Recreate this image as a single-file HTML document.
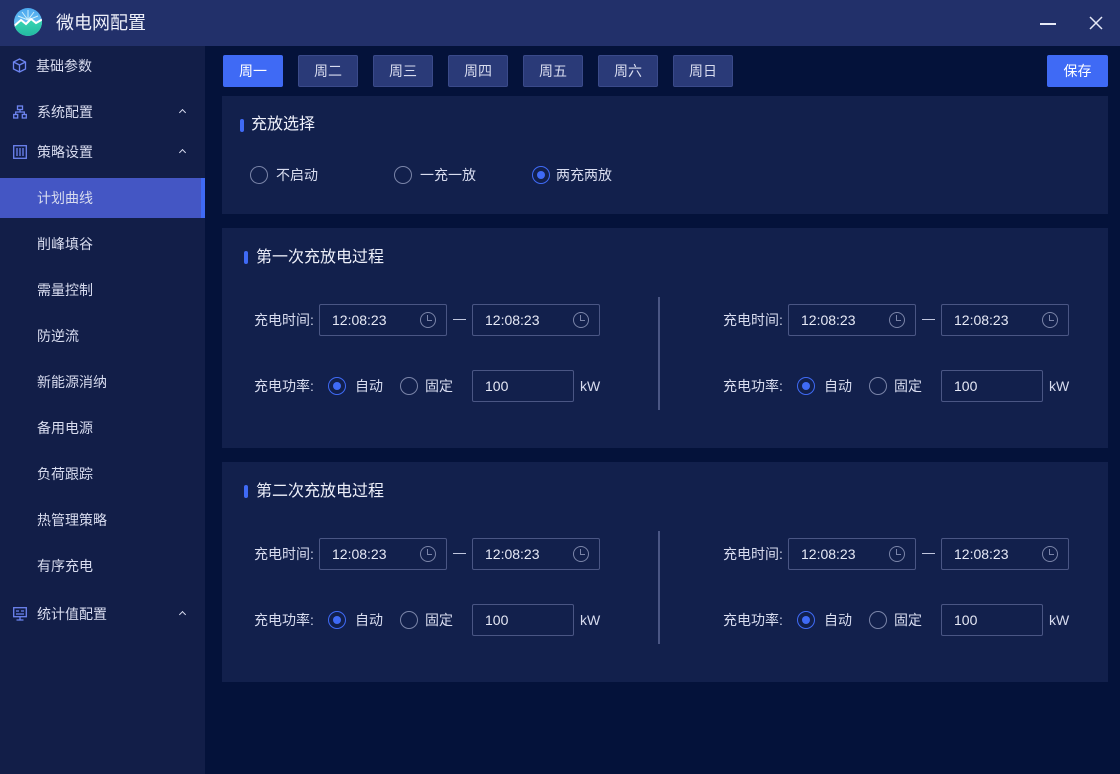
<!DOCTYPE html><html><head><meta charset="utf-8"><style>
*{margin:0;padding:0;box-sizing:border-box}
body{width:1120px;height:774px;background:#04123a;font-family:"Liberation Sans","Noto Sans CJK SC",sans-serif;color:#d8dcef;position:relative;overflow:hidden;font-size:14px}
.a{position:absolute}
.title{left:0;top:0;width:1120px;height:46px;background:#22306a}
.side{left:0;top:46px;width:205px;height:728px;background:#121e48}
.mi{position:absolute;left:37px;font-size:14px;color:#d8dcef;line-height:20px}
.car{position:absolute;left:180px;width:5px;height:5px;border-left:1.5px solid #d8dcef;border-top:1.5px solid #d8dcef;transform:rotate(45deg)}
.btn{position:absolute;top:55px;width:60px;height:32px;background:#2a3a78;border:1px solid #3a4a8a;border-radius:2px;text-align:center;line-height:30px;font-size:14px;color:#d8dcef}
.blue{background:#3f6af5;border-color:#3f6af5;color:#fff}
.panel{position:absolute;left:222px;width:886px;background:#12204c}
.ph{position:absolute;font-size:16px;color:#eef0fa;line-height:20px}
.bar{position:absolute;width:4px;height:13px;border-radius:2px;background:#3f6af5}
.r{position:absolute;width:18px;height:18px;border-radius:50%;border:1.5px solid #7a84a8}
.r.on{border-color:#3f6af5}
.r.on::after{content:"";position:absolute;left:3.5px;top:3.5px;width:8px;height:8px;border-radius:50%;background:#3f6af5}
.lb{position:absolute;font-size:14px;line-height:20px;color:#d8dcef}
.in{position:absolute;height:32px;border:1px solid #4a5684;border-radius:2px;font-size:14px;line-height:30px;padding-left:12px;color:#e6e9f6}
.clk{position:absolute;right:10px;top:7px;width:16px;height:16px;border:1.5px solid #7a84a8;border-radius:50%}
.clk::after{content:"";position:absolute;left:6px;top:2px;width:4px;height:5px;border-left:1.5px solid #7a84a8;border-bottom:1.5px solid #7a84a8}
</style></head><body>
<div class="a title"></div>
<svg class="a" style="left:13px;top:7px" width="30" height="30" viewBox="0 0 30 30"><defs><linearGradient id="s" x1="0" y1="0" x2="0" y2="1"><stop offset="0" stop-color="#4aa6ee"/><stop offset="1" stop-color="#7ed0f5"/></linearGradient><linearGradient id="m" x1="0" y1="0" x2="0" y2="1"><stop offset="0" stop-color="#3ad6b4"/><stop offset="1" stop-color="#22b9a0"/></linearGradient><clipPath id="c"><circle cx="15" cy="15" r="14"/></clipPath></defs><g clip-path="url(#c)"><rect width="30" height="30" fill="url(#s)"/><path d="M15 13 L15 3 M15 13 L9 5 M15 13 L21 5 M15 13 L5 9 M15 13 L25 9" stroke="#cdeefc" stroke-width="1"/><path d="M0 20 L8 13 L13 17 L18 12 L23 16 L30 12 V30 H0 Z" fill="url(#m)"/><path d="M0 20 L8 13 L13 17 L18 12 L23 16 L30 12" stroke="#fff" stroke-width="2" fill="none"/></g></svg>
<div class="a" style="left:56px;top:11px;font-size:18px;color:#eef0fa;line-height:24px">微电网配置</div>
<div class="a" style="left:1040px;top:23px;width:16px;height:1.5px;background:#e6e9f6"></div>
<svg class="a" style="left:1089px;top:16px" width="14" height="14" viewBox="0 0 14 14" stroke="#e6e9f6" stroke-width="1.5"><path d="M1 1L13 13M13 1L1 13"/></svg>
<div class="a side"></div>
<svg class="a" style="left:12px;top:58px" width="15" height="15" viewBox="0 0 15 15" fill="none" stroke="#6d84f0" stroke-width="1.3"><path d="M7.5 1 L13.5 4 V11 L7.5 14 L1.5 11 V4 Z M1.5 4 L7.5 7 L13.5 4 M7.5 7 V14"/></svg>
<div class="mi" style="top:56px;left:36px">基础参数</div>
<svg class="a" style="left:13px;top:105px" width="14" height="14" viewBox="0 0 14 14" fill="none" stroke="#6d84f0" stroke-width="1.3"><rect x="4.5" y="1" width="5" height="3.5"/><rect x="0.7" y="9.5" width="4" height="3.5"/><rect x="9.3" y="9.5" width="4" height="3.5"/><path d="M7 4.5V7M2.7 9.5V7H11.3V9.5"/></svg>
<div class="mi" style="top:102px">系统配置</div><div class="car" style="top:110px"></div>
<svg class="a" style="left:13px;top:145px" width="14" height="14" viewBox="0 0 14 14" fill="none" stroke="#6d84f0" stroke-width="1.3"><rect x="0.7" y="0.7" width="12.6" height="12.6"/><path d="M4 3V11M7 3V11M10 3V11"/></svg>
<div class="mi" style="top:142px">策略设置</div><div class="car" style="top:150px"></div>
<div class="a" style="left:0;top:178px;width:205px;height:40px;background:#4456c4"></div>
<div class="a" style="left:201px;top:178px;width:4px;height:40px;background:#3f6af5"></div>
<div class="mi" style="top:188px">计划曲线</div>
<div class="mi" style="top:234px">削峰填谷</div>
<div class="mi" style="top:280px">需量控制</div>
<div class="mi" style="top:326px">防逆流</div>
<div class="mi" style="top:372px">新能源消纳</div>
<div class="mi" style="top:418px">备用电源</div>
<div class="mi" style="top:464px">负荷跟踪</div>
<div class="mi" style="top:510px">热管理策略</div>
<div class="mi" style="top:556px">有序充电</div>
<svg class="a" style="left:13px;top:607px" width="14" height="14" viewBox="0 0 14 14" fill="none" stroke="#6d84f0" stroke-width="1.3"><rect x="0.7" y="0.7" width="12.6" height="9"/><path d="M7 9.7V12.5M3.5 13H10.5M3 4H6M8 4H11M3 7H11"/></svg>
<div class="mi" style="top:604px">统计值配置</div><div class="car" style="top:612px"></div>

<div class="btn blue" style="left:223px">周一</div>
<div class="btn" style="left:298px">周二</div>
<div class="btn" style="left:373px">周三</div>
<div class="btn" style="left:448px">周四</div>
<div class="btn" style="left:523px">周五</div>
<div class="btn" style="left:598px">周六</div>
<div class="btn" style="left:673px">周日</div>
<div class="btn blue" style="left:1047px;width:61px">保存</div>

<div class="panel" style="top:96px;height:118px">
<div class="bar" style="left:18px;top:23px"></div><div class="ph" style="left:29px;top:19px">充放选择</div>
<div class="r" style="left:28px;top:70px"></div><div class="lb" style="left:54px;top:69px">不启动</div>
<div class="r" style="left:172px;top:70px"></div><div class="lb" style="left:198px;top:69px">一充一放</div>
<div class="r on" style="left:310px;top:70px"></div><div class="lb" style="left:334px;top:69px">两充两放</div>
</div>

<div class="panel" style="top:228px;height:220px" id="p1"></div>
<div class="panel" style="top:462px;height:220px" id="p2"></div>
<script>
function fill(el,t){
 var h='<div class="bar" style="left:22px;top:23px"></div><div class="ph" style="left:34px;top:20px">'+t+'</div>'+
 '<div class="a" style="left:436px;top:69px;width:2px;height:113px;background:#4a5684"></div>';
 [0,469].forEach(function(o){
  var x=o;
  h+='<div class="lb" style="left:'+(32+x)+'px;top:82px">充电时间:</div>'+
  '<div class="in" style="left:'+(97+x)+'px;top:76px;width:128px">12:08:23<div class="clk"></div></div>'+
  '<div class="a" style="left:'+(231+x)+'px;top:91px;width:13px;height:1px;background:#c0c6de"></div>'+
  '<div class="in" style="left:'+(250+x)+'px;top:76px;width:128px">12:08:23<div class="clk"></div></div>'+
  '<div class="lb" style="left:'+(32+x)+'px;top:148px">充电功率:</div>'+
  '<div class="r on" style="left:'+(106+x)+'px;top:149px"></div><div class="lb" style="left:'+(133+x)+'px;top:148px">自动</div>'+
  '<div class="r" style="left:'+(178+x)+'px;top:149px"></div><div class="lb" style="left:'+(203+x)+'px;top:148px">固定</div>'+
  '<div class="in" style="left:'+(250+x)+'px;top:142px;width:102px">100</div>'+
  '<div class="lb" style="left:'+(358+x)+'px;top:148px">kW</div>';
 });
 el.innerHTML=h;
}
fill(document.getElementById('p1'),'第一次充放电过程');
fill(document.getElementById('p2'),'第二次充放电过程');
</script>
</body></html>
